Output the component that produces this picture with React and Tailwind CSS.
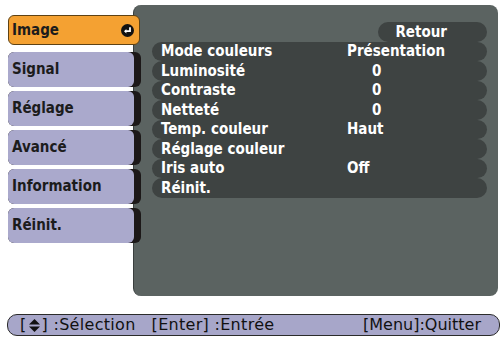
import React from "react";

const tabs = ["Signal", "Réglage", "Avancé", "Information", "Réinit."];
const rows = [
  ["Mode couleurs", "Présentation", false],
  ["Luminosité", "0", true],
  ["Contraste", "0", true],
  ["Netteté", "0", true],
  ["Temp. couleur", "Haut", false],
  ["Réglage couleur", "", false],
  ["Iris auto", "Off", false],
  ["Réinit.", "", false],
];

const cond = "font-['DejaVu_Sans_Condensed','DejaVu_Sans',sans-serif] font-stretch-condensed";

function EnterIcon() {
  return (
    <svg width="13" height="13" viewBox="0 0 13 13">
      <circle cx="6.5" cy="6.5" r="6.5" fill="#111" />
      <path d="M9 3.2 V7.2 H4.6" fill="none" stroke="#fff" strokeWidth="1.8" />
      <path d="M3 7.2 L5.4 5 L5.4 9.4 Z" fill="#fff" />
    </svg>
  );
}

function UpDown() {
  return (
    <svg width="11" height="13" viewBox="0 0 11 13" className="inline-block mx-[2px]">
      <path d="M5.5 0 L11 5.6 L0 5.6 Z" fill="#111" />
      <path d="M0 7.4 L11 7.4 L5.5 13 Z" fill="#111" />
    </svg>
  );
}

export default function App() {
  return (
    <div className="w-[503px] h-[340px] bg-white flex flex-col font-['DejaVu_Sans',sans-serif] overflow-hidden">
      <div className="flex items-start">
        <div className="relative z-10 w-[133px] shrink-0 pl-[8px] pt-[15px] flex flex-col">
          <div className="w-[132px] h-[30px] bg-[#f4a132] border border-[#5e4214] rounded-[6px] flex items-center justify-between pl-[3px] pr-[5px]">
            <span className={`${cond} text-[15px] font-bold text-[#1c1c1c]`}>Image</span>
            <EnterIcon />
          </div>
          <div className="flex flex-col gap-[4px] mt-[7px]">
            {tabs.map((t) => (
              <div key={t} className="w-[133px] h-[35px] bg-[#1c1818] rounded-[6px] flex">
                <div className="w-[126px] h-full bg-[#aaa9cc] rounded-[6px] flex items-center pl-[4px]">
                  <span className={`${cond} text-[15px] font-bold text-[#1c1c1c]`}>{t}</span>
                </div>
              </div>
            ))}
          </div>
        </div>
        <div className="mt-[5px] w-[365px] h-[291px] bg-[#5b6361] rounded-[8px] border-l border-[#3a3f3e] pt-[17px] pl-[18px] pr-[11px] flex flex-col">
          <div className="flex justify-end">
            <div className="w-[109px] h-[19.5px] rounded-full bg-[#3e4342] flex items-center justify-end pr-[40px]">
              <span className={`${cond} text-[15px] font-bold text-white`}>Retour</span>
            </div>
          </div>
          {rows.map(([label, value, zero]) => (
            <div key={label} className="h-[19.5px] rounded-full bg-[#3e4342] flex items-center pl-[9px]">
              <span className={`${cond} w-[186px] text-[15px] font-bold text-white whitespace-nowrap`}>{label}</span>
              <span className={`${cond} text-[15px] font-bold text-white whitespace-nowrap ${zero ? "pl-[25px]" : ""}`}>{value}</span>
            </div>
          ))}
        </div>
      </div>
      <div className="mt-[18px] ml-[7px] w-[493px] h-[22px] bg-[#a7a6c9] border-[1.5px] border-[#2b2b2b] rounded-[10px] flex items-center pl-[12px] pr-[18px] text-[16px] tracking-[0.3px] text-[#111] whitespace-nowrap">
        <span className="flex items-center">[<UpDown />] :Sélection</span>
        <span className="ml-[16px]">[Enter] :Entrée</span>
        <span className="ml-auto tracking-[0px]">[Menu]:Quitter</span>
      </div>
    </div>
  );
}
